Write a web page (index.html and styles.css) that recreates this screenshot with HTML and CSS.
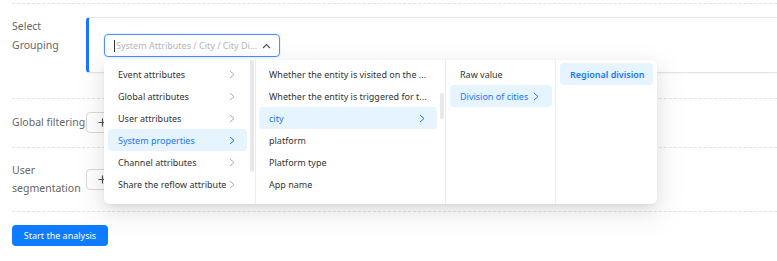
FILE: index.html
```html
<!DOCTYPE html>
<html lang="en">
<head>
    <meta charset="UTF-8">
    <title>Analysis Settings</title>
    <link rel="stylesheet" href="styles.css">
</head>
<body>
    <div class="page">
        <div class="row row-group">
            <div class="row-label">Select Grouping</div>
            <div class="group-panel">
                <div class="cascader">
                    <div class="cascader-input">
                        <span class="caret"></span>
                        <span class="placeholder">System Attributes / City / City Di...</span>
                        <svg class="arrow-up" width="9" height="6" viewBox="0 0 9 6"><polyline points="1,5 4.5,1.5 8,5" fill="none" stroke="#555" stroke-width="1.2"/></svg>
                    </div>
                    <div class="cascader-menu">
                        <ul class="menu-col col-1">
                            <li class="menu-item">Event attributes <svg class="chev" width="6" height="9" viewBox="0 0 6 9"><polyline points="1,1 5,4.5 1,8" fill="none" stroke="currentColor" stroke-width="1"/></svg></li>
                            <li class="menu-item">Global attributes <svg class="chev" width="6" height="9" viewBox="0 0 6 9"><polyline points="1,1 5,4.5 1,8" fill="none" stroke="currentColor" stroke-width="1"/></svg></li>
                            <li class="menu-item">User attributes <svg class="chev" width="6" height="9" viewBox="0 0 6 9"><polyline points="1,1 5,4.5 1,8" fill="none" stroke="currentColor" stroke-width="1"/></svg></li>
                            <li class="menu-item active">System properties <svg class="chev" width="6" height="9" viewBox="0 0 6 9"><polyline points="1,1 5,4.5 1,8" fill="none" stroke="currentColor" stroke-width="1"/></svg></li>
                            <li class="menu-item">Channel attributes <svg class="chev" width="6" height="9" viewBox="0 0 6 9"><polyline points="1,1 5,4.5 1,8" fill="none" stroke="currentColor" stroke-width="1"/></svg></li>
                            <li class="menu-item">Share the reflow attribute <svg class="chev" width="6" height="9" viewBox="0 0 6 9"><polyline points="1,1 5,4.5 1,8" fill="none" stroke="currentColor" stroke-width="1"/></svg></li>
                            <span class="thumb thumb-1"></span>
                        </ul>
                        <ul class="menu-col col-2">
                            <li class="menu-item">Whether the entity is visited on the ...</li>
                            <li class="menu-item">Whether the entity is triggered for t...</li>
                            <li class="menu-item active">city <svg class="chev" width="6" height="9" viewBox="0 0 6 9"><polyline points="1,1 5,4.5 1,8" fill="none" stroke="currentColor" stroke-width="1"/></svg></li>
                            <li class="menu-item">platform</li>
                            <li class="menu-item">Platform type</li>
                            <li class="menu-item">App name</li>
                            <span class="thumb thumb-2"></span>
                        </ul>
                        <ul class="menu-col col-3">
                            <li class="menu-item">Raw value</li>
                            <li class="menu-item active">Division of cities <svg class="chev" width="6" height="9" viewBox="0 0 6 9"><polyline points="1,1 5,4.5 1,8" fill="none" stroke="currentColor" stroke-width="1"/></svg></li>
                        </ul>
                        <ul class="menu-col col-4">
                            <li class="menu-item active selected">Regional division</li>
                        </ul>
                    </div>
                </div>
            </div>
        </div>
        <div class="row">
            <div class="row-label one-line">Global filtering</div>
            <button class="add-btn"><svg width="9" height="9" viewBox="0 0 9 9"><path d="M4.5 0.5v8M0.5 4.5h8" stroke="#555" stroke-width="1.2"/></svg></button>
        </div>
        <div class="row">
            <div class="row-label two-line">User segmentation</div>
            <button class="add-btn"><svg width="9" height="9" viewBox="0 0 9 9"><path d="M4.5 0.5v8M0.5 4.5h8" stroke="#555" stroke-width="1.2"/></svg></button>
        </div>
        <div class="row row-action">
            <button class="primary-btn">Start the analysis</button>
        </div>
    </div>
</body>
</html>
```

FILE: styles.css
```css
body {
    margin: 0;
    font-family: 'Noto Sans', Arial, sans-serif;
    background: #fff;
    color: #333;
}
.page {
    padding: 3px 0 0 12px;
}
.row {
    display: flex;
    align-items: center;
    border-top: 1px dashed #e3e3e3;
    padding: 13px 0 14px;
}
.row-group {
    align-items: flex-start;
    padding-bottom: 25px;
}
.row-label {
    width: 74px;
    flex-shrink: 0;
    font-size: 10.5px;
    line-height: 19px;
    color: #666;
}
.row-label.one-line {
    white-space: nowrap;
}
.row-label.two-line {
    line-height: 18px;
}
.group-panel {
    flex: 1;
    height: 38px;
    border: 1px solid #e6e6e6;
    border-left: 3px solid #1677ff;
    border-right: none;
    border-radius: 4px 0 0 4px;
    padding: 16px 0 0 15px;
    box-sizing: content-box;
    box-shadow: 0 1px 3px rgba(0, 0, 0, 0.04);
}
.cascader {
    position: relative;
    width: 176px;
}
.cascader-input {
    display: flex;
    align-items: center;
    height: 21px;
    border: 1px solid #4a90ff;
    border-radius: 4px;
    padding: 0 8px 0 9px;
    box-shadow: 0 0 0 1px rgba(22, 119, 255, 0.08);
}
.caret {
    width: 1px;
    height: 12px;
    background: #333;
    margin-right: 1px;
}
.placeholder {
    flex: 1;
    font-size: 9px;
    color: #b8b8b8;
    white-space: nowrap;
    overflow: hidden;
}
.arrow-up {
    margin-left: 4px;
}
.cascader-menu {
    position: absolute;
    top: 26px;
    left: 0;
    display: flex;
    width: 553px;
    height: 144px;
    background: #fff;
    border-radius: 6px;
    box-shadow: 0 6px 16px rgba(0, 0, 0, 0.08), 0 3px 6px -4px rgba(0, 0, 0, 0.12), 0 9px 28px 8px rgba(0, 0, 0, 0.05);
    z-index: 10;
}
.menu-col {
    position: relative;
    list-style: none;
    margin: 0;
    padding: 3px 8px 3px 4px;
    box-sizing: border-box;
    height: 100%;
    border-right: 1px solid #ececec;
}
.col-1 { width: 152px; }
.col-2 { width: 190px; padding-left: 3px; }
.col-3 { width: 110px; padding-right: 3px; }
.col-4 { width: 101px; padding-right: 4px; border-right: none; }
.menu-item {
    display: flex;
    align-items: center;
    justify-content: space-between;
    height: 22px;
    padding: 0 12px 0 10px;
    font-size: 9px;
    color: #333;
    white-space: nowrap;
    border-radius: 4px;
}
.menu-item .chev {
    color: #aaa;
    flex-shrink: 0;
}
.menu-item.active {
    background: #e6f4ff;
    color: #1677ff;
}
.menu-item.active .chev {
    color: #1677ff;
}
.col-3 .menu-item {
    justify-content: flex-start;
}
.col-3 .menu-item .chev {
    margin-left: 5px;
}
.menu-item.selected {
    font-weight: 600;
}
.thumb {
    position: absolute;
    right: 1px;
    width: 4px;
    border-radius: 2px;
    background: #e8e8ec;
}
.thumb-1 { top: 0; height: 112px; }
.thumb-2 { top: 33px; height: 26px; }
.add-btn {
    display: flex;
    align-items: center;
    width: 40px;
    height: 21px;
    padding: 0 0 0 11px;
    border: 1px solid #d9d9d9;
    border-radius: 4px;
    background: #fff;
}
.row-action {
    padding-top: 13px;
}
.primary-btn {
    height: 21px;
    width: 96px;
    border: none;
    border-radius: 4px;
    background: #0f7bff;
    color: #fff;
    font-family: inherit;
    font-size: 9px;
    padding: 0;
}
```
